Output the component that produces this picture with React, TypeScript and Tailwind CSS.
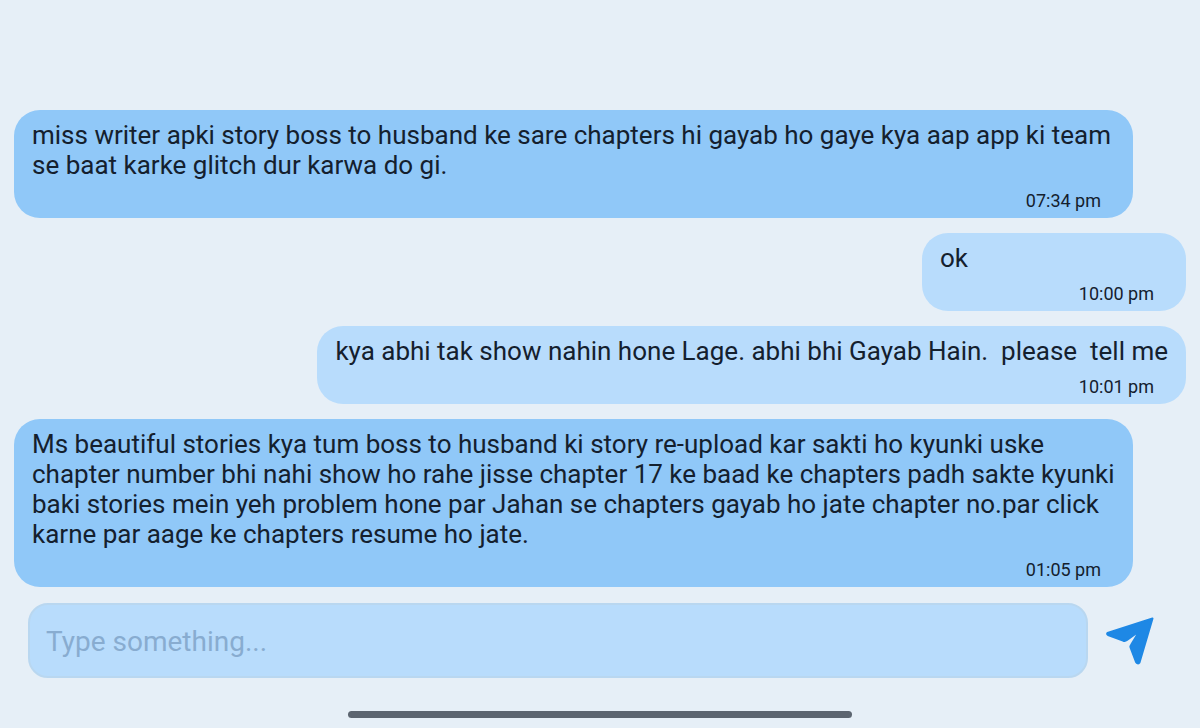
import { useState } from 'react';
import clsx from 'clsx';

interface Message {
  id: number;
  text: string;
  time: string;
  mine: boolean;
}

const messages: Message[] = [
  {
    id: 1,
    text: 'miss writer apki story boss to husband ke sare chapters hi gayab ho gaye kya aap app ki team se baat karke glitch dur karwa do gi.',
    time: '07:34 pm',
    mine: false,
  },
  { id: 2, text: 'ok', time: '10:00 pm', mine: true },
  {
    id: 3,
    text: 'kya abhi tak show nahin hone Lage. abhi bhi Gayab Hain.  please  tell me',
    time: '10:01 pm',
    mine: true,
  },
  {
    id: 4,
    text: 'Ms beautiful stories kya tum boss to husband ki story re-upload kar sakti ho kyunki uske chapter number bhi nahi show ho rahe jisse chapter 17 ke baad ke chapters padh sakte kyunki baki stories mein yeh problem hone par Jahan se chapters gayab ho jate chapter no.par click karne par aage ke chapters resume ho jate.',
    time: '01:05 pm',
    mine: false,
  },
];

function MessageBubble({ text, time, mine }: Omit<Message, 'id'>) {
  return (
    <li
      className={clsx(
        'min-w-[264px] rounded-[26px] px-[18px] pt-[10px] pb-[6px] text-[#14202e]',
        mine ? 'self-end bg-[#b8dcfc]' : 'mr-[53px] self-start bg-[#90c8f8]',
      )}
    >
      <p className="text-[26px] leading-[30px] whitespace-pre-wrap">{text}</p>
      <time className="mt-[10px] block pr-[14px] text-right text-lg leading-[22px]">
        {time}
      </time>
    </li>
  );
}

function SendIcon() {
  return (
    <svg
      viewBox="0 0 50 50"
      className="h-[50px] w-[50px]"
      fill="#1e88e5"
      stroke="#1e88e5"
      strokeWidth="2"
      strokeLinejoin="round"
      aria-hidden="true"
    >
      <path d="M2.5 17 47.5 2.5 34.5 46.5Q32.5 48.5 31 46L25.5 31.5Q25 30.5 26 29L34.5 15 22 24Q20 25.5 18 24.5L3 19Q1.5 18 2.5 17Z" />
    </svg>
  );
}

export default function App() {
  const [draft, setDraft] = useState('');

  return (
    <main className="flex min-h-screen flex-col justify-end bg-[#e6eff7] font-['Roboto',sans-serif]">
      <ul className="flex flex-col gap-[15px] px-[14px]">
        {messages.map(({ id, ...message }) => (
          <MessageBubble key={id} {...message} />
        ))}
      </ul>

      <form
        className="mt-4 flex items-center gap-[17px] pr-[45px] pl-7"
        onSubmit={(e) => {
          e.preventDefault();
          setDraft('');
        }}
      >
        <input
          type="text"
          aria-label="Message"
          placeholder="Type something..."
          value={draft}
          onChange={(e) => setDraft(e.target.value)}
          className="h-[75px] min-w-0 flex-1 rounded-[20px] border-2 border-[#b9d7f0] bg-[#b8dcfc] px-4 pt-[2px] text-[28px] text-[#14202e] outline-none placeholder:text-[#88acd0]"
        />
        <button type="submit" aria-label="Send" className="shrink-0">
          <SendIcon />
        </button>
      </form>

      <div className="mt-[33px] mb-[10px] h-[7px] w-[504px] max-w-full self-center rounded-full bg-[#5c6570]" />
    </main>
  );
}
